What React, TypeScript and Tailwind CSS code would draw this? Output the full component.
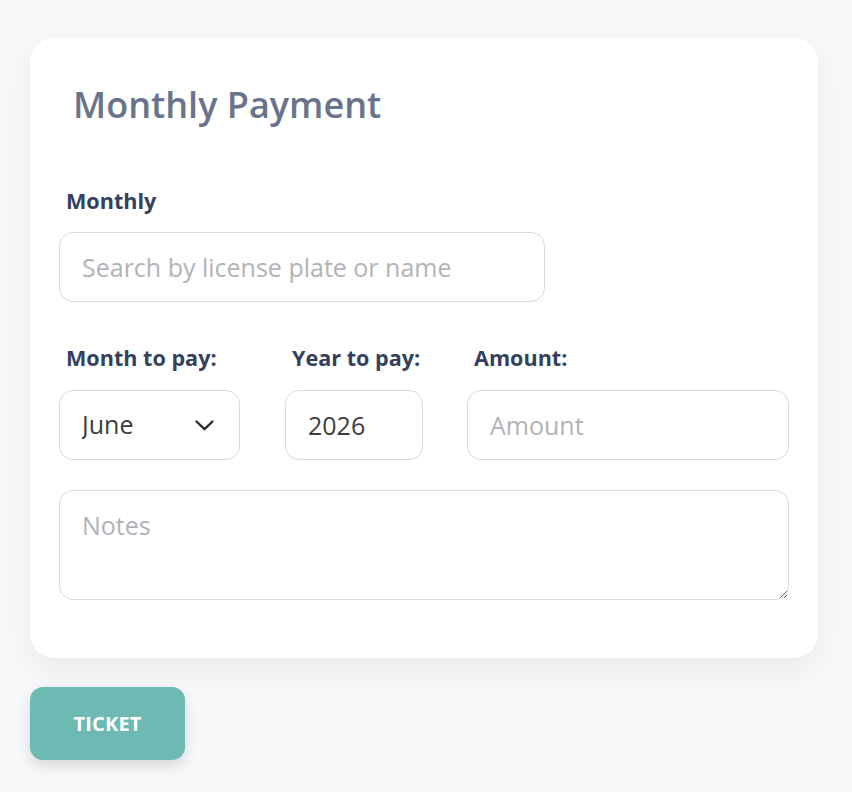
import React from "react";

export default function App() {
  const months = [
    "January",
    "February",
    "March",
    "April",
    "May",
    "June",
    "July",
    "August",
    "September",
    "October",
    "November",
    "December",
  ];

  return (
    <div className="min-h-screen bg-[#f7f8fa] pt-[38px] px-[30px] font-['Open_Sans',sans-serif]">
      <div className="w-[788px] bg-white rounded-[24px] shadow-[0_12px_32px_rgba(0,0,0,0.06)] pt-[45px] pb-[58px] px-[29px]">
        <h1 className="pl-[14px] text-[36px] leading-[44px] font-semibold text-[#6a738c]">
          Monthly Payment
        </h1>

        <label className="block mt-[60px] pl-[7px] text-[21.6px] leading-[28px] font-bold text-[#34415c]">
          Monthly
        </label>
        <input
          type="text"
          placeholder="Search by license plate or name"
          className="mt-[17px] block w-[486px] h-[70px] px-[22px] rounded-[14px] border border-[#d9dadd] bg-white text-[25px] text-[#3d3d3d] placeholder:text-[#b1b3b8] outline-none"
        />

        <div className="mt-[42px] grid grid-cols-[181px_138px_1fr] gap-x-[45px] gap-y-[18px]">
          <label className="pl-[7px] text-[21.6px] leading-[28px] font-bold text-[#34415c] whitespace-nowrap">
            Month to pay:
          </label>
          <label className="pl-[7px] text-[21.6px] leading-[28px] font-bold text-[#34415c] whitespace-nowrap">
            Year to pay:
          </label>
          <label className="pl-[6px] text-[21.6px] leading-[28px] font-bold text-[#34415c] whitespace-nowrap">
            Amount:
          </label>

          <div className="relative">
            <select
              defaultValue="June"
              className="appearance-none block w-full h-[70px] pl-[22px] pr-[40px] rounded-[14px] border border-[#d9dadd] bg-white text-[25px] text-[#3d3d3d] outline-none"
            >
              {months.map((m) => (
                <option key={m} value={m}>
                  {m}
                </option>
              ))}
            </select>
            <svg
              className="pointer-events-none absolute right-[26px] top-[30px]"
              width="19"
              height="11"
              viewBox="0 0 19 11"
              fill="none"
            >
              <path
                d="M1.5 1.5 L9.5 9.2 L17.5 1.5"
                stroke="#2b2b2b"
                strokeWidth="2.3"
                strokeLinecap="round"
                strokeLinejoin="round"
              />
            </svg>
          </div>
          <input
            type="text"
            defaultValue="2026"
            className="block w-full h-[70px] px-[22px] rounded-[14px] border border-[#d9dadd] bg-white text-[25px] text-[#3d3d3d] outline-none"
          />
          <input
            type="text"
            placeholder="Amount"
            className="-ml-px block w-[calc(100%+1px)] h-[70px] px-[22px] rounded-[14px] border border-[#d9dadd] bg-white text-[25px] text-[#3d3d3d] placeholder:text-[#b1b3b8] outline-none"
          />
        </div>

        <textarea
          placeholder="Notes"
          className="mt-[30px] block w-full h-[110px] px-[22px] pt-[16px] rounded-[14px] border border-[#d9dadd] bg-white text-[25px] leading-[36px] text-[#3d3d3d] placeholder:text-[#b1b3b8] outline-none"
        />
      </div>

      <button className="mt-[29px] w-[155px] h-[73px] rounded-[13px] bg-[#6cbab3] text-white text-[20px] font-bold tracking-[0.2px] shadow-[0_6px_14px_rgba(0,0,0,0.13)]">
        TICKET
      </button>
    </div>
  );
}
